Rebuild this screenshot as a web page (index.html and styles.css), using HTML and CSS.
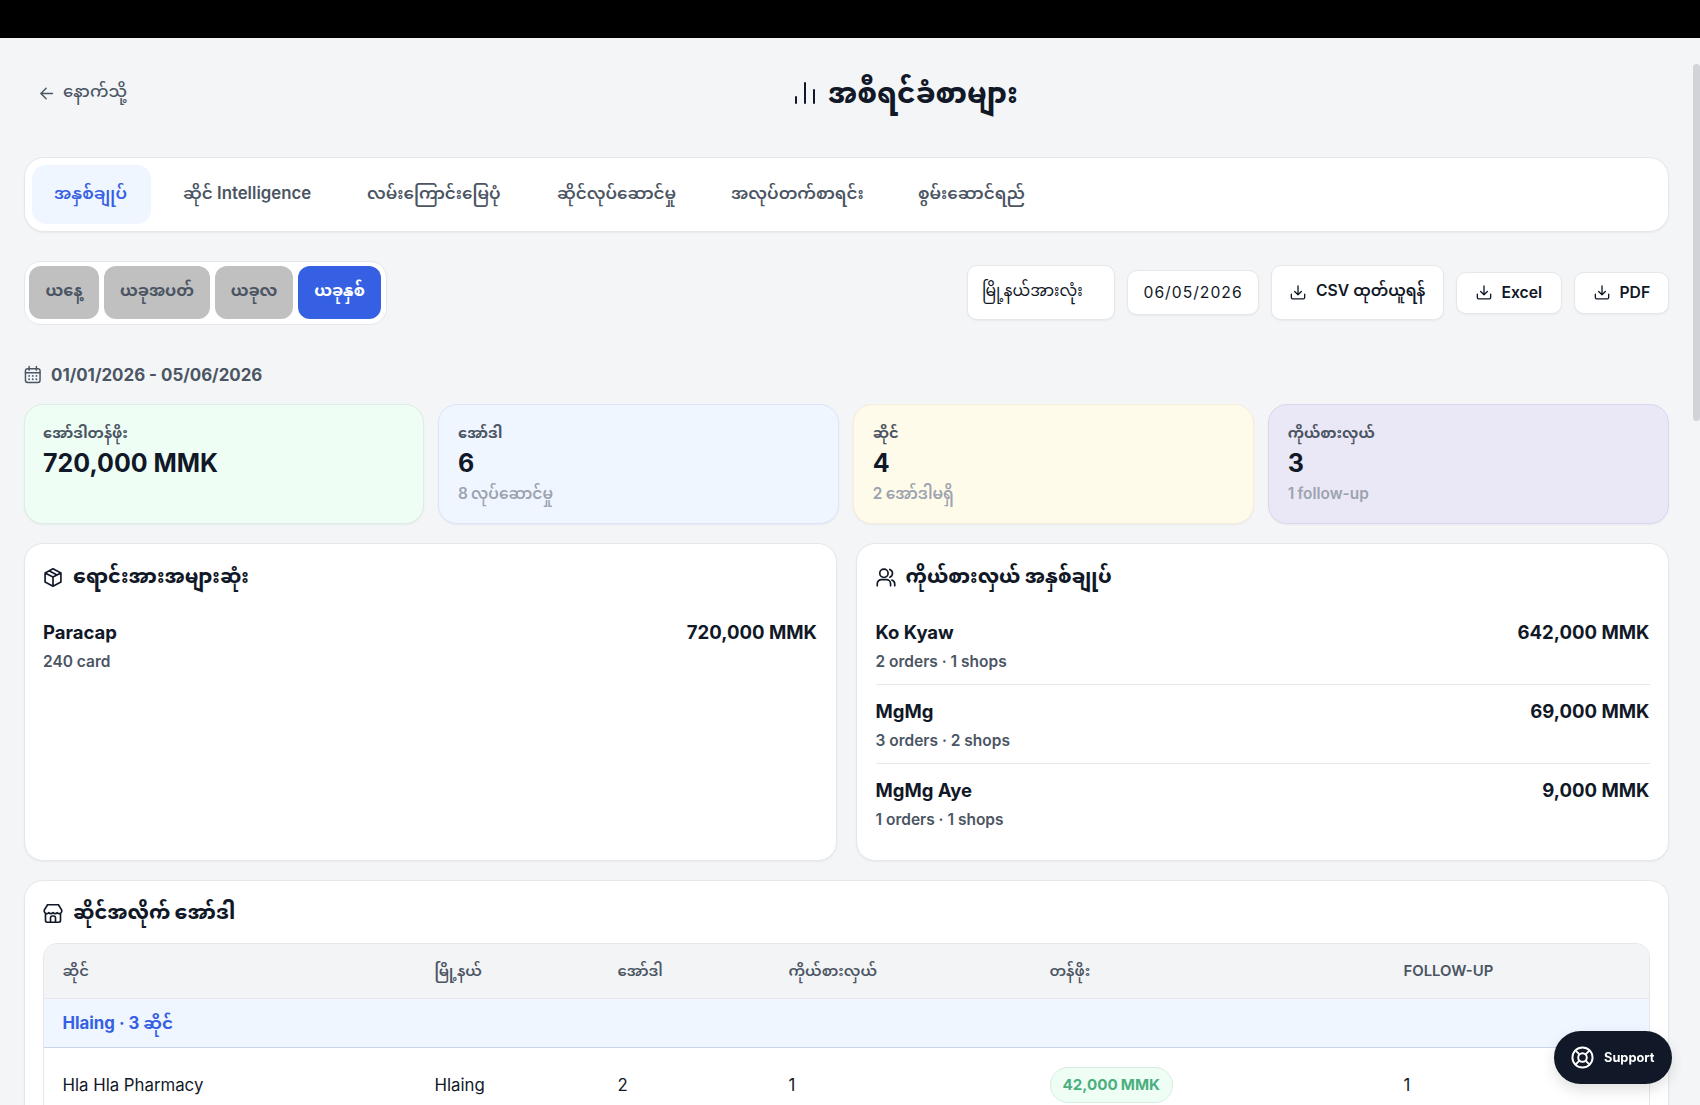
FILE: index.html
```html
<!DOCTYPE html>
<html lang="my">
<head>
    <meta charset="UTF-8">
    <meta name="viewport" content="width=device-width, initial-scale=1.0">
    <title>အစီရင်ခံစာများ</title>
    <link rel="stylesheet" href="styles.css">
</head>
<body>

<div class="top-strip"></div>

<!-- Shared icons -->
<svg class="icon-defs" width="0" height="0">
    <symbol id="icon-download" viewBox="0 0 24 24">
        <path d="M12 2v13.500M7 10.500l5 5 5-5M2 14.500v5a2 2 0 0 0 2 2h16a2 2 0 0 0 2-2v-5"/>
    </symbol>
</svg>

<main class="page">
    <header class="page-header">
        <a href="#" class="back-link">
            <svg class="icon" viewBox="0 0 24 24"><path d="M20.500 12H4M11.500 4.500L4 12l7.500 7.500"/></svg>
            <span>နောက်သို့</span>
        </a>
        <h1>
            <svg class="icon" viewBox="0 0 24 24"><path d="M3 16v6M12 2v20M21 9v13"/></svg>
            <span>အစီရင်ခံစာများ</span>
        </h1>
    </header>

    <!-- Report tabs -->
    <nav class="tabs">
        <button class="tab active">အနှစ်ချုပ်</button>
        <button class="tab tab-shop">ဆိုင် Intelligence</button>
        <button class="tab tab-map">လမ်းကြောင်းမြေပုံ</button>
        <button class="tab tab-activity">ဆိုင်လုပ်ဆောင်မှု</button>
        <button class="tab tab-attendance">အလုပ်တက်စာရင်း</button>
        <button class="tab tab-performance">စွမ်းဆောင်ရည်</button>
    </nav>

    <!-- Filters -->
    <div class="toolbar">
        <div class="range">
            <button class="range-day">ယနေ့</button>
            <button class="range-week">ယခုအပတ်</button>
            <button class="range-month">ယခုလ</button>
            <button class="range-year active">ယခုနှစ်</button>
        </div>
        <div class="actions">
            <div class="field select">မြို့နယ်အားလုံး</div>
            <div class="field date">06/05/2026</div>
            <button class="field export export-csv"><svg class="icon"><use href="#icon-download"/></svg><span>CSV ထုတ်ယူရန်</span></button>
            <button class="field export export-excel"><svg class="icon"><use href="#icon-download"/></svg><span>Excel</span></button>
            <button class="field export export-pdf"><svg class="icon"><use href="#icon-download"/></svg><span>PDF</span></button>
        </div>
    </div>

    <div class="period">
        <svg class="icon" viewBox="0 0 24 24"><rect x="2" y="4" width="20" height="19" rx="3"/><path d="M7 1v5M17 1v5M2 9.500h20"/><path class="dots" d="M7 14h.01M12 14h.01M17 14h.01M7 18.500h.01M12 18.500h.01M17 18.500h.01"/></svg>
        <span>01/01/2026 - 05/06/2026</span>
    </div>

    <!-- Totals -->
    <section class="stats">
        <div class="stat green">
            <div class="stat-label">အော်ဒါတန်ဖိုး</div>
            <div class="stat-value">720,000 MMK</div>
        </div>
        <div class="stat blue">
            <div class="stat-label">အော်ဒါ</div>
            <div class="stat-value">6</div>
            <div class="stat-note">8 လုပ်ဆောင်မှု</div>
        </div>
        <div class="stat yellow">
            <div class="stat-label">ဆိုင်</div>
            <div class="stat-value">4</div>
            <div class="stat-note">2 အော်ဒါမရှိ</div>
        </div>
        <div class="stat purple">
            <div class="stat-label">ကိုယ်စားလှယ်</div>
            <div class="stat-value">3</div>
            <div class="stat-note">1 follow-up</div>
        </div>
    </section>

    <section class="panels">
        <div class="panel">
            <h2>
                <svg class="icon" viewBox="0 0 24 24"><path d="M12 1.500l9.500 5v11l-9.500 5-9.500-5v-11zM2.500 6.500l9.500 5 9.500-5M12 11.500v11M7.200 4l9.600 5"/></svg>
                <span>ရောင်းအားအများဆုံး</span>
            </h2>
            <div class="item">
                <div>
                    <div class="item-name">Paracap</div>
                    <div class="item-note">240 card</div>
                </div>
                <div class="item-total">720,000 MMK</div>
            </div>
        </div>
        <div class="panel">
            <h2>
                <svg class="icon" viewBox="0 0 24 24"><circle cx="9.500" cy="7" r="5"/><path d="M1.500 22v-2.500a5 5 0 0 1 5-5h6a5 5 0 0 1 5 5V22M16.500 2.300a5 5 0 0 1 0 9.400M19 15a5 5 0 0 1 3.500 4.700V22"/></svg>
                <span>ကိုယ်စားလှယ် အနှစ်ချုပ်</span>
            </h2>
            <div class="item">
                <div>
                    <div class="item-name">Ko Kyaw</div>
                    <div class="item-note">2 orders · 1 shops</div>
                </div>
                <div class="item-total">642,000 MMK</div>
            </div>
            <div class="item">
                <div>
                    <div class="item-name">MgMg</div>
                    <div class="item-note">3 orders · 2 shops</div>
                </div>
                <div class="item-total">69,000 MMK</div>
            </div>
            <div class="item">
                <div>
                    <div class="item-name">MgMg Aye</div>
                    <div class="item-note">1 orders · 1 shops</div>
                </div>
                <div class="item-total">9,000 MMK</div>
            </div>
        </div>
    </section>

    <!-- Orders by shop -->
    <section class="panel orders">
        <h2>
            <svg class="icon" viewBox="0 0 24 24"><path d="M5.500 1.500h13L22.500 8v1.500a3 3 0 0 1-5.300 1.500 3.500 3.500 0 0 1-5.200 0 3.500 3.500 0 0 1-5.200 0 3 3 0 0 1-5.300-1.500V8zM3 12v8.500a2 2 0 0 0 2 2h14a2 2 0 0 0 2-2V12M9 22v-5a2 2 0 0 1 2-2h2a2 2 0 0 1 2 2v5"/></svg>
            <span>ဆိုင်အလိုက် အော်ဒါ</span>
        </h2>
        <div class="table-wrap">
            <table>
                <colgroup>
                    <col class="col-shop"><col class="col-town"><col class="col-orders">
                    <col class="col-rep"><col class="col-value"><col>
                </colgroup>
                <thead>
                    <tr>
                        <th>ဆိုင်</th>
                        <th>မြို့နယ်</th>
                        <th>အော်ဒါ</th>
                        <th>ကိုယ်စားလှယ်</th>
                        <th>တန်ဖိုး</th>
                        <th class="latin">FOLLOW-UP</th>
                    </tr>
                </thead>
                <tbody>
                    <tr class="group">
                        <td colspan="6">Hlaing · 3 ဆိုင်</td>
                    </tr>
                    <tr>
                        <td>Hla Hla Pharmacy</td>
                        <td>Hlaing</td>
                        <td>2</td>
                        <td>1</td>
                        <td><span class="pill">42,000 MMK</span></td>
                        <td>1</td>
                    </tr>
                </tbody>
            </table>
        </div>
    </section>
</main>

<div class="scroll-thumb"></div>

<button class="support">
    <svg class="icon" viewBox="0 0 24 24"><circle cx="12" cy="12" r="10.500"/><circle cx="12" cy="12" r="4.500"/><path d="M4.600 4.600l4.200 4.200M15.200 15.200l4.200 4.200M19.400 4.600l-4.200 4.200M8.800 15.200l-4.200 4.200"/></svg>
    <span>Support</span>
</button>

</body>
</html>
```

FILE: styles.css
```css
/* General Styles */
* {
    box-sizing: border-box;
}

body {
    font-family: Inter, "Noto Sans Myanmar", "Noto Sans", sans-serif;
    margin: 0;
    height: 1105px;
    overflow: hidden;
    background-color: #f3f5f7;
    color: #111827;
}

button {
    font-family: inherit;
    border: none;
    cursor: pointer;
    white-space: nowrap;
}

.icon {
    flex: none;
    fill: none;
    stroke: currentColor;
    stroke-width: 2;
    stroke-linecap: round;
    stroke-linejoin: round;
}

.icon-defs {
    display: none;
}

.top-strip {
    height: 38px;
    background-color: #000;
}

.page {
    padding: 0 31px 0 23.5px;
}

/* Header */
.page-header {
    display: grid;
    grid-template-columns: 755px auto;
    align-items: center;
    height: 110px;
    margin-bottom: 9px;
    padding-left: 14.5px;
}

.back-link {
    display: flex;
    align-items: center;
    gap: 8px;
    color: #4b5563;
    font-size: 16.5px;
    font-weight: 500;
    text-decoration: none;
}

.back-link .icon {
    width: 17px;
    height: 17px;
}

h1 {
    display: flex;
    align-items: center;
    gap: 11px;
    margin: 0;
    font-size: 27.7px;
    font-weight: 800;
    white-space: nowrap;
}

h1 span {
    padding-top: 6px;
}

h1 .icon {
    width: 24px;
    height: 26px;
}

/* Report tabs */
.tabs {
    display: flex;
    height: 75px;
    padding: 7px;
    background-color: white;
    border: 1px solid #e5e7eb;
    border-radius: 20px;
    box-shadow: 0 1px 2px rgba(0, 0, 0, 0.05);
}

.tab {
    width: 119px;
    padding: 1px 22.5px 0;
    margin-right: 10px;
    background: none;
    border-radius: 14px;
    color: #4b5563;
    font-size: 16.8px;
    font-weight: 600;
    text-align: left;
}

.tab.active {
    background-color: #eff6ff;
    color: #3560e3;
}

.tab-shop { width: 174px; }
.tab-map { width: 180px; }
.tab-activity { width: 164px; }
.tab-attendance { width: 177px; }
.tab-performance { width: 152px; }

/* Filters */
.toolbar {
    display: flex;
    justify-content: space-between;
    align-items: center;
    margin-top: 28.5px;
}

.range {
    display: flex;
    gap: 5px;
    height: 64px;
    padding: 4.5px;
    background-color: white;
    border: 1px solid #e5e7eb;
    border-radius: 17px;
}

.range button {
    padding: 0 0 1px;
    background-color: #c0c0c0;
    border-radius: 12px;
    color: #4b5563;
    font-size: 16px;
    font-weight: 700;
}

.range .active {
    background-color: #3560e3;
    color: white;
}

.range-day { width: 70px; }
.range-week { width: 106px; }
.range-month { width: 78px; }
.range-year { width: 83px; }

.actions {
    display: flex;
    align-items: center;
    gap: 12px;
}

.field {
    display: flex;
    align-items: center;
    background-color: white;
    border: 1px solid #e5e7eb;
    border-radius: 10px;
    box-shadow: 0 1px 2px rgba(0, 0, 0, 0.05);
    color: #111827;
    font-size: 15.7px;
}

.select {
    width: 147.5px;
    height: 55px;
    padding: 0 14px 1px;
    white-space: nowrap;
}

.date {
    width: 132px;
    height: 45px;
    padding: 0 0 0 16px;
    letter-spacing: 1px;
}

.export {
    gap: 10px;
    height: 42px;
    padding: 0 18.5px;
    font-weight: 600;
}

.export .icon {
    width: 16px;
    height: 17px;
}

.export-csv {
    width: 173.5px;
    height: 55px;
}

.export-excel { width: 106px; }
.export-pdf { width: 95px; }

.period {
    display: flex;
    align-items: center;
    gap: 10px;
    height: 30px;
    margin: 35px 0 14.5px;
    color: #4b5563;
    font-size: 16.9px;
    font-weight: 700;
}

.period .icon {
    width: 17.5px;
    height: 19px;
}

.period .dots {
    stroke-width: 2.5;
}

/* Totals */
.stats {
    display: grid;
    grid-template-columns: repeat(4, 1fr);
    gap: 14px;
}

.stat {
    height: 120px;
    padding: 14px 18.5px;
    border: 1.5px solid;
    border-radius: 19px;
    box-shadow: 0 1px 2px rgba(0, 0, 0, 0.05);
}

.green { background-color: #effef5; border-color: #dbeee4; }
.blue { background-color: #eff6ff; border-color: #dde4fa; }
.yellow { background-color: #fffbeb; border-color: #f7ecda; }
.purple { background-color: #eae8f6; border-color: #dbd5ef; }

.stat-label {
    height: 28px;
    color: #4b5563;
    font-size: 14.7px;
    font-weight: 700;
    line-height: 28px;
}

.stat-value {
    height: 32px;
    font-size: 25px;
    font-weight: 700;
    line-height: 32px;
}

.stat-note {
    height: 28px;
    color: #9ca3af;
    font-size: 15.4px;
    font-weight: 600;
    line-height: 29px;
    word-spacing: -0.5px;
}

/* Panels */
.panels {
    display: grid;
    grid-template-columns: 1fr 1fr;
    gap: 19.5px;
    margin: 19px 0;
}

.panel {
    padding: 17px 18.5px 0;
    background-color: white;
    border: 1px solid #e5e7eb;
    border-radius: 19px;
    box-shadow: 0 1px 2px rgba(0, 0, 0, 0.05);
}

.panels .panel {
    height: 317.5px;
}

h2 {
    display: flex;
    align-items: center;
    gap: 10px;
    height: 32px;
    margin: 0 0 22.5px;
    font-size: 19.2px;
    font-weight: 800;
    white-space: nowrap;
}

h2 span {
    padding-top: 3px;
}

h2 .icon {
    width: 20px;
    height: 21px;
}

.item {
    display: flex;
    justify-content: space-between;
    height: 78.5px;
    padding-top: 1px;
}

.item + .item {
    border-top: 1px solid #e5e7eb;
    padding-top: 11px;
}

.item:nth-of-type(1) {
    height: 68.5px;
}

.item-name,
.item-total {
    font-size: 18.6px;
    font-weight: 700;
    line-height: 30px;
}

.item-name {
    font-size: 18.5px;
}

.item-note {
    color: #4b5563;
    font-size: 15.5px;
    font-weight: 600;
    line-height: 29px;
}

/* Orders table */
.orders {
    height: 300px;
}

.orders h2 {
    margin-bottom: 13px;
}

.table-wrap {
    border: 1px solid #e5e7eb;
    border-radius: 14px;
    overflow: hidden;
}

table {
    width: 100%;
    table-layout: fixed;
    border-collapse: collapse;
}

.col-shop { width: 372px; }
.col-town { width: 183px; }
.col-orders { width: 171px; }
.col-rep { width: 261px; }
.col-value { width: 354px; }

th,
td {
    padding: 0 18.5px;
    text-align: left;
    white-space: nowrap;
}

th {
    height: 55px;
    padding-top: 3px;
    background-color: #f3f4f6;
    border-bottom: 1px solid #e5e7eb;
    color: #4b5563;
    font-size: 14.9px;
    font-weight: 600;
}

th.latin {
    padding-top: 0;
}

td {
    height: 74px;
    font-size: 16.8px;
}

.group td {
    height: 49px;
    padding-top: 4px;
    background-color: #eff6ff;
    border-bottom: 1.5px solid #c9d5ef;
    color: #3560e3;
    font-weight: 700;
}

.pill {
    display: inline-block;
    padding: 0 12px;
    background-color: #effef5;
    border: 1px solid #d5eee1;
    border-radius: 18px;
    color: #4cae80;
    font-size: 15.2px;
    font-weight: 700;
    line-height: 34px;
    word-spacing: -0.5px;
}

/* Floating items */
.scroll-thumb {
    position: fixed;
    top: 64px;
    right: 0;
    width: 7px;
    height: 357px;
    background-color: #d1d3d8;
    border-radius: 4px;
}

.support {
    position: fixed;
    right: 28px;
    bottom: 21px;
    display: flex;
    align-items: center;
    gap: 10px;
    width: 118px;
    height: 53px;
    padding: 0 17px;
    background-color: #111827;
    border-radius: 27px;
    box-shadow: 0 6px 14px rgba(0, 0, 0, 0.12);
    color: white;
    font-size: 12.8px;
    font-weight: 700;
}

.support .icon {
    width: 23px;
    height: 23px;
}
```
